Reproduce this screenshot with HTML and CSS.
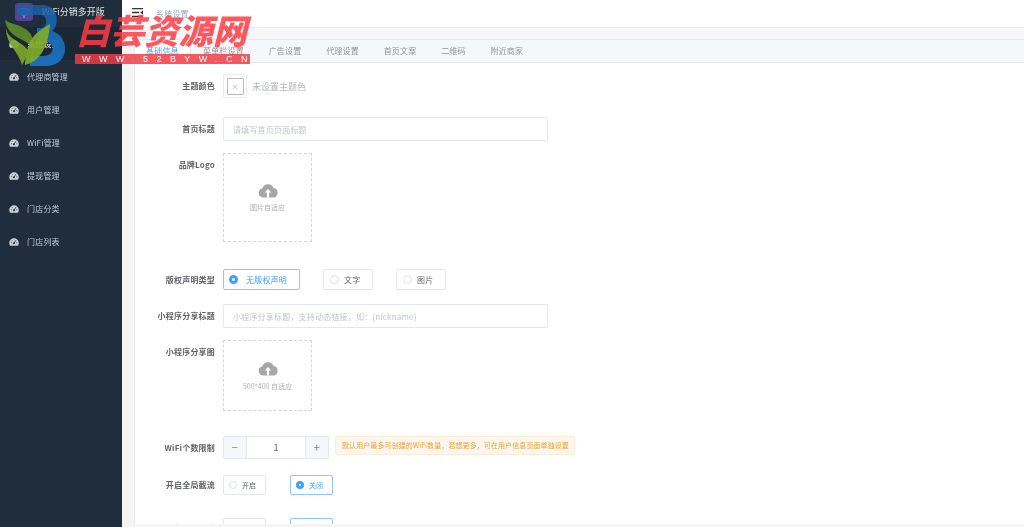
FILE: index.html
```html
<!DOCTYPE html>
<html lang="zh">
<head>
<meta charset="utf-8">
<title>系统设置</title>
<link rel="stylesheet" href="styles.css">
</head>
<body>
<div class="app">
  <aside class="sidebar">
    <div class="brand">
      <span class="brand-icon"><svg viewBox="0 0 18 18" width="18" height="18"><g fill="none" stroke="#4f9fd6" stroke-width="1.300" stroke-linecap="round"><path d="M3.500 7.500a8 8 0 0 1 11 0"/><path d="M5.500 9.800a5 5 0 0 1 7 0"/><path d="M7.500 12a2.200 2.200 0 0 1 3 0"/></g><circle cx="9" cy="14" r="1" fill="#4f9fd6"/></svg></span>
      <span class="brand-name">WiFi分销多开版</span>
    </div>
    <nav class="menu">
      <a class="menu-item active"><svg class="gauge" viewBox="0 0 10 8"><use href="#g"/></svg>系统设置</a>
      <a class="menu-item"><svg class="gauge" viewBox="0 0 10 8"><use href="#g"/></svg>代理商管理</a>
      <a class="menu-item"><svg class="gauge" viewBox="0 0 10 8"><use href="#g"/></svg>用户管理</a>
      <a class="menu-item"><svg class="gauge" viewBox="0 0 10 8"><use href="#g"/></svg>WiFi管理</a>
      <a class="menu-item"><svg class="gauge" viewBox="0 0 10 8"><use href="#g"/></svg>提现管理</a>
      <a class="menu-item"><svg class="gauge" viewBox="0 0 10 8"><use href="#g"/></svg>门店分类</a>
      <a class="menu-item"><svg class="gauge" viewBox="0 0 10 8"><use href="#g"/></svg>门店列表</a>
    </nav>
  </aside>
  <main class="main">
    <header class="topbar">
      <svg class="burger" viewBox="0 0 11 9" width="11" height="9"><path d="M0 .7h11M0 4.500h7M0 8.300h11" stroke="#333" stroke-width="1.300"/><path d="M11 2.300v4.400L8.300 4.500z" fill="#333"/></svg>
      <span class="crumb">系统设置</span>
    </header>
    <div class="band"></div>
    <section class="card">
      <div class="tabs">
        <span class="tab current">基础信息</span>
        <span class="tab">菜单栏设置</span>
        <span class="tab">广告设置</span>
        <span class="tab">代理设置</span>
        <span class="tab">首页文案</span>
        <span class="tab">二维码</span>
        <span class="tab">附近商家</span>
      </div>
      <form class="form">
        <div class="row r-color">
          <label class="label">主题颜色</label>
          <span class="picker"><span class="picker-inner">×</span></span>
          <span class="hint">未设置主题色</span>
        </div>
        <div class="row r-title">
          <label class="label">首页标题</label>
          <span class="input">请填写首页页面标题</span>
        </div>
        <div class="row r-logo">
          <label class="label top">品牌Logo</label>
          <div class="upload">
            <svg class="cloud" viewBox="0 0 20 15" width="20" height="15"><use href="#c"/></svg>
            <span>图片自适应</span>
          </div>
        </div>
        <div class="row r-copy">
          <label class="label">版权声明类型</label>
          <span class="radio on wide"><i></i>无版权声明</span>
          <span class="radio mid"><i></i>文字</span>
          <span class="radio mid"><i></i>图片</span>
        </div>
        <div class="row r-share">
          <label class="label">小程序分享标题</label>
          <span class="input">小程序分享标题，支持动态链接，如：{nickname}</span>
        </div>
        <div class="row r-img">
          <label class="label top">小程序分享图</label>
          <div class="upload">
            <svg class="cloud" viewBox="0 0 20 15" width="20" height="15"><use href="#c"/></svg>
            <span>500*400 自适应</span>
          </div>
        </div>
        <div class="row r-num">
          <label class="label">WiFi个数限制</label>
          <span class="stepper"><b>−</b><span>1</span><b>+</b></span>
          <span class="alert">默认用户最多可创建的WiFi数量，若想更多，可在用户信息页面单独设置</span>
        </div>
        <div class="row r-flow">
          <label class="label">开启全局截流</label>
          <span class="radio small"><i></i>开启</span>
          <span class="radio small on"><i></i>关闭</span>
        </div>
        <div class="row r-last">
          <label class="label">开启WiFi设计</label>
          <span class="radio small"><i></i>开启</span>
          <span class="radio small on"><i></i>关闭</span>
        </div>
      </form>
    </section>
  </main>
  <div class="footer-strip"></div>
</div>

<div class="watermark">
  <svg class="wm-logo" viewBox="0 0 70 70" width="70" height="70">
    <defs>
      <linearGradient id="bg" x1="0" y1="0" x2="0" y2="1">
        <stop offset="0" stop-color="#1a5fa8" stop-opacity=".8"/>
        <stop offset=".45" stop-color="#1a6ab5" stop-opacity=".95"/>
        <stop offset="1" stop-color="#1a6fb8"/>
      </linearGradient>
    </defs>
    <path d="M17 5H42C59 5 60 25 52 31C70 36 71 66 45 66H30V56H43C56 56 56 41 43 41H37V28H41C48 28 48 15 41 15H17Z" fill="url(#bg)"/>
    <g opacity=".9">
      <path d="M5 20C12 25 22 24 30 33C33 37 33 42 31 46C24 38 8 38 5 20Z" fill="#5f8f2a"/>
      <path d="M6 28C8 40 20 40 28 50C27 55 25 60 22 65C18 50 6 45 6 28Z" fill="#7da92a"/>
      <path d="M50 24C40 30 32 35 29 45C26 52 25 60 25 65C38 62 48 50 50 24Z" fill="#83ad2b"/>
    </g>
  </svg>
  <div class="wm-text">
    <div class="wm-title">白芸资源网</div>
    <div class="wm-url">WWW.52BYW.CN</div>
  </div>
</div>

<svg class="defs" width="0" height="0" aria-hidden="true">
  <defs>
    <g id="g"><path fill="#c8cfd7" d="M5 .3A4.800 4.800 0 0 0 .2 5.100c0 1 .3 1.900.9 2.600h7.800c.6-.7.9-1.600.9-2.600A4.800 4.800 0 0 0 5 .3Z"/><circle cx="5" cy="5.300" r="1" fill="#1f2d3d"/><path d="M5 5.300 6.900 2.200M1.900 4.800h.9M7.300 4.800h.9M3.200 2.400l.5.600" stroke="#1f2d3d" stroke-width=".8"/></g>
    <g id="c"><path fill="#a6a6a6" d="M5 14.500a4.500 4.500 0 0 1-.7-8.900A6 6 0 0 1 15.600 5a4.800 4.800 0 0 1-.3 9.500Z"/><path fill="#fff" d="M10 6l3.300 3.500h-2.200v5H8.900v-5H6.700Z"/></g>
  </defs>
</svg>
</body>
</html>
```
FILE: styles.css
```css
* { box-sizing: border-box; }
html, body { margin: 0; height: 100%; overflow: hidden; }
body {
  font-family: "Noto Sans CJK SC", "Liberation Sans", sans-serif;
  font-size: 8px;
  letter-spacing: .2px;
  color: #606266;
  background: #fff;
}
.defs { position: absolute; }
.app { display: flex; height: 527px; position: relative; overflow: hidden; filter: blur(.4px); }

.sidebar { width: 122px; flex: none; background: #1f2d3d; color: #bfcbd9; }
.brand { height: 27px; display: flex; align-items: flex-start; padding: 3px 0 0 15px; }
.brand-icon { width: 18px; height: 18px; border-radius: 3px; background: #56418f; flex: none; }
.brand-name { margin-left: 9px; font-size: 9px; line-height: 18px; color: #dfe4ea; letter-spacing: 0; }
.menu { display: flex; flex-direction: column; }
.menu-item { height: 33px; display: flex; align-items: center; padding-left: 9px; color: #bfcbd9; }
.menu-item.active { background: #1b2735; color: #e6ebf0; }
.gauge { width: 10px; height: 8px; margin-right: 8px; flex: none; }

.main { flex: 1; min-width: 0; display: flex; flex-direction: column; background: #f4f4f5; }
.topbar { height: 27px; flex: none; background: #fff; display: flex; align-items: flex-start; padding: 8px 0 0 10px; }
.burger { flex: none; }
.crumb { margin-left: 13px; color: #97a8be; line-height: 9px; position: relative; top: 1px; }
.band { height: 12px; flex: none; background: #f6f6f6; border-top: 1px solid #eceded; }
.card { flex: 1; margin-left: 12px; background: #fff; border: 1px solid #e6e8eb; border-right: 0; border-bottom: 0; overflow: hidden; }

.tabs { height: 23px; display: flex; background: #f5f7fa; border-bottom: 1px solid #e4e7ed; }
.tab { padding: 0 12.350px; line-height: 22px; white-space: nowrap; color: #909399; }
.tab.current { color: #409eff; background: #fff; border-right: 1px solid #e4e7ed; width: 55.600px; padding: 0 0 0 11px; height: 23px; }

.form { display: flex; flex-direction: column; }
.row { display: flex; align-items: center; flex: none; }
.label { width: 82px; padding: 0 2px 1px 0; margin-right: 6px; text-align: right; font-weight: 700; color: #606266; white-space: nowrap; flex: none; }
.label.top { align-self: flex-start; line-height: 24px; }

.r-color { margin-top: 11px; height: 24px; }
.picker { width: 24px; height: 24px; border: 1px solid #eaebee; border-radius: 2px; padding: 2.500px; display: block; }
.picker-inner { display: flex; align-items: center; justify-content: center; width: 100%; height: 100%; border: 1px solid #bbb; border-radius: 1px; color: #aaa; font-size: 7px; }
.hint { margin-left: 5px; color: #b5b7bb; font-size: 9px; letter-spacing: 0; }

.input { display: flex; align-items: center; width: 325px; height: 24px; padding-left: 9px; border: 1px solid #e4e7ed; border-radius: 2px; color: #c0c4cc; background: #fff; }
.r-title { margin-top: 19px; }
.r-logo { margin-top: 12px; align-items: flex-start; }
.upload { width: 89px; height: 89px; border: 1px dashed #d3d5d9; display: flex; flex-direction: column; align-items: center; padding-top: 29px; color: #acafb5; gap: 4px; background: #fff; font-size: 7px; letter-spacing: 0; }
.cloud { display: block; }

.r-copy { margin-top: 27px; height: 21px; }
.radio { display: flex; align-items: center; height: 21px; border: 1px solid #e4e7ed; border-radius: 2px; color: #606266; flex: none; }
.radio i { width: 9px; height: 9px; border: 1px solid #dcdfe6; border-radius: 50%; background: #fff; flex: none; }
.radio.on { border-color: #8cc5ff; color: #409eff; }
.radio.on i { border: 3px solid #409eff; }
.radio.wide { width: 77px; padding-left: 5px; gap: 8px; margin-right: 23px; }
.radio.mid { width: 50px; padding-left: 6px; gap: 5px; margin-right: 23px; }
.radio.small { width: 43px; height: 20px; padding-left: 5px; gap: 5px; margin-right: 24px; font-size: 7px; letter-spacing: .1px; }
.radio.small i { width: 8px; height: 8px; }

.r-share { margin-top: 14px; }
.r-img { margin-top: 12px; align-items: flex-start; }
.r-img .upload { height: 71px; padding-top: 20px; gap: 5px; }
.r-num { margin-top: 25px; align-items: flex-start; height: 23px; }
.r-num .label { line-height: 23px; }
.stepper { width: 106px; height: 23px; display: flex; border: 1px solid #e4e7ed; border-radius: 2px; text-align: center; font-size: 9px; color: #606266; }
.stepper b { width: 23px; flex: none; background: #f5f7fa; color: #7d8086; font-weight: 400; font-size: 11px; line-height: 21px; }
.stepper b:first-child { border-right: 1px solid #e4e7ed; }
.stepper b:last-child { border-left: 1px solid #e4e7ed; }
.stepper span { flex: 1; line-height: 21px; }
.alert { margin-left: 6px; width: 240px; height: 19px; padding-left: 6px; line-height: 17px; font-size: 7px; letter-spacing: .09px; white-space: nowrap; color: #e6a23c; background: #fdf6ec; border: 1px solid #faecd8; border-radius: 2px; }
.r-flow { margin-top: 16px; height: 20px; }
.r-last { margin-top: 23px; height: 20px; }
.footer-strip { position: absolute; left: 122px; right: 0; bottom: 0; height: 3px; background: #f4f4f5; }

.watermark { position: absolute; left: 0; top: 0; display: flex; pointer-events: none; filter: blur(.35px); letter-spacing: 0; }
.wm-logo { display: block; flex: none; }
.wm-text { margin-left: 5px; margin-top: 10px; width: 175px; }
.wm-title { padding-left: 1px; font-family: "Noto Sans CJK SC", sans-serif; font-weight: 900; font-style: italic; font-size: 34.200px; line-height: 38px; color: #ff3b44; opacity: .85; white-space: nowrap; }
.wm-url { height: 10px; margin-top: 6px; background: rgba(240, 60, 68, .85); color: #fff; font-size: 9px; line-height: 10px; letter-spacing: 8.400px; padding-left: 7px; white-space: nowrap; overflow: hidden; font-family: "Liberation Sans", sans-serif; }
```
